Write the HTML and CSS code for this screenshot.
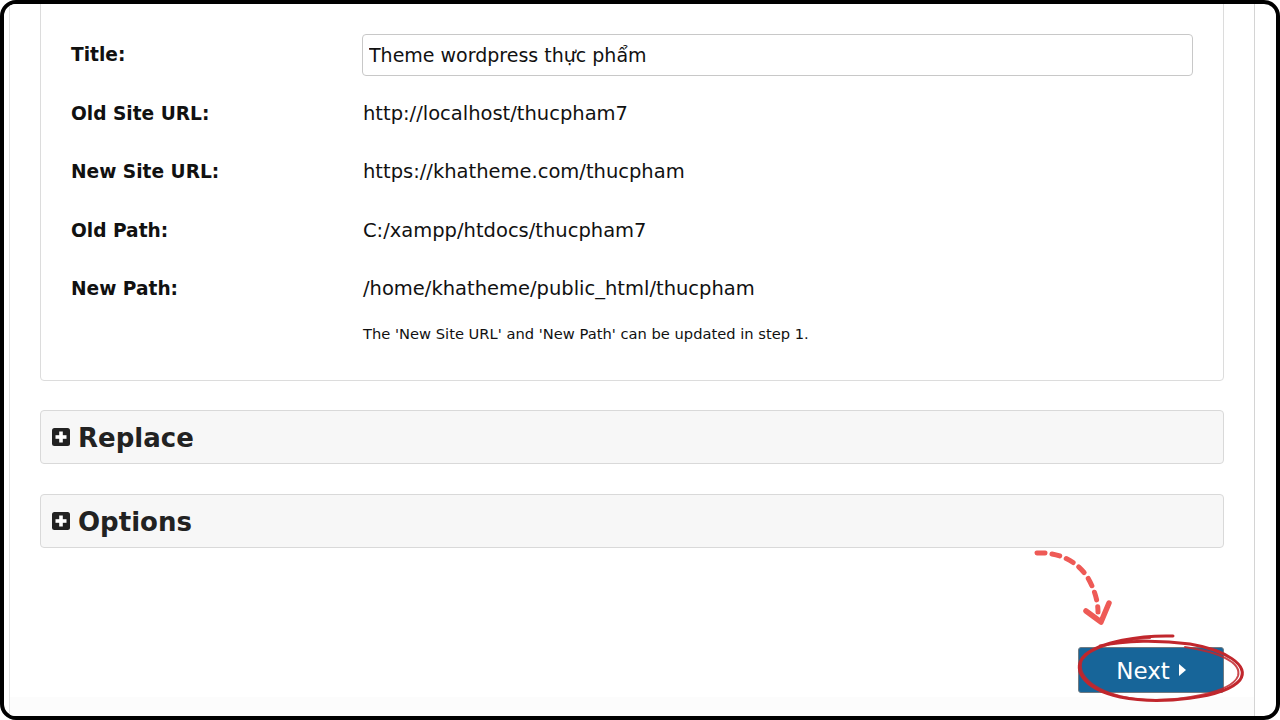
FILE: index.html
```html
<!DOCTYPE html>
<html>
<head>
    <title>Migration - Step 3</title>
    <link rel="stylesheet" href="styles.css">
</head>
<body>
    <div class="screen">
        <div class="page">
            <div class="panel">
                <div class="row">
                    <div class="label">Title:</div>
                    <div class="value"><input class="title-input" type="text" value="Theme wordpress thực phẩm"></div>
                </div>
                <div class="row">
                    <div class="label">Old Site URL:</div>
                    <div class="value">http://localhost/thucpham7</div>
                </div>
                <div class="row">
                    <div class="label">New Site URL:</div>
                    <div class="value">https://khatheme.com/thucpham</div>
                </div>
                <div class="row">
                    <div class="label">Old Path:</div>
                    <div class="value">C:/xampp/htdocs/thucpham7</div>
                </div>
                <div class="row">
                    <div class="label">New Path:</div>
                    <div class="value">/home/khatheme/public_html/thucpham</div>
                </div>
                <p class="note">The 'New Site URL' and 'New Path' can be updated in step 1.</p>
            </div>

            <div class="section">
                <svg class="toggle" width="18" height="18" viewBox="0 0 18 18"><rect width="18" height="18" rx="2.5" fill="#222"/><rect x="7.2" y="3.5" width="3.6" height="11" fill="#fff"/><rect x="3.5" y="7.2" width="11" height="3.6" fill="#fff"/></svg>
                Replace
            </div>
            <div class="section">
                <svg class="toggle" width="18" height="18" viewBox="0 0 18 18"><rect width="18" height="18" rx="2.5" fill="#222"/><rect x="7.2" y="3.5" width="3.6" height="11" fill="#fff"/><rect x="3.5" y="7.2" width="11" height="3.6" fill="#fff"/></svg>
                Options
            </div>

            <div class="actions">
                <button class="next">Next <span class="caret"></span></button>
            </div>
        </div>

        <!-- hand-drawn marks over the button -->
        <svg class="marks" width="1280" height="720" viewBox="0 0 1280 720">
            <path d="M1037 553 C1060 552 1078 562 1088 578 C1096 592 1098 604 1098 612" fill="none" stroke="#ee5a56" stroke-width="5" stroke-linecap="round" stroke-dasharray="8 7"/>
            <path d="M1086 611 L1101 622 L1109 603" fill="none" stroke="#ee5a56" stroke-width="5.5" stroke-linecap="round" stroke-linejoin="round"/>
            <path d="M1173 636 C1140 635 1100 642 1085 655 C1072 667 1080 688 1120 697 C1160 705 1225 698 1240 680 C1250 665 1225 650 1190 644 C1160 640 1125 640 1100 646" fill="none" stroke="#c1272d" stroke-width="3" stroke-linecap="round"/>
            <path d="M1150 638 C1115 640 1090 648 1082 660 C1076 676 1095 693 1135 699 C1180 703 1232 692 1238 676 C1242 662 1218 652 1185 647" fill="none" stroke="#c1272d" stroke-width="2" stroke-linecap="round" opacity="0.85"/>
        </svg>
    </div>
</body>
</html>
```

FILE: styles.css
```css
* {
    margin: 0;
    padding: 0;
    box-sizing: border-box;
}
body {
    font-family: 'DejaVu Sans', Verdana, sans-serif;
    background: #fff;
    color: #111;
}
.screen {
    position: relative;
    width: 1280px;
    height: 720px;
    border: 4px solid #000;
    border-radius: 16px;
    overflow: hidden;
    background: #fff;
}
.page {
    margin-left: 5px;
    width: 1246px;
    height: 760px;
    margin-top: -10px;
    padding: 0 30px;
    border-left: 1px solid #e2e2e2;
    border-right: 1px solid #d4d4d4;
    background: linear-gradient(to bottom, #fff 0, #fff 703px, #fcfcfc 703px);
}
.panel {
    border: 1px solid #dcdcdc;
    border-radius: 4px;
    padding: 30.5px 30px 35.5px 30px;
    background: #fff;
}
.row {
    display: flex;
    align-items: center;
    height: 58.5px;
}
.label {
    width: 292px;
    font-weight: 700;
    font-size: 18.6px;
}
.value {
    flex: 1;
    font-size: 19.5px;
}
.title-input {
    width: 831px;
    height: 42px;
    padding: 0 6px;
    border: 1px solid #c8c8c8;
    border-radius: 4px;
    font-family: 'DejaVu Sans', Verdana, sans-serif;
    font-size: 19px;
    color: #111;
    background: #fff;
    outline: none;
}
.note {
    margin: 6px 0 0 292px;
    font-size: 14.7px;
    line-height: 20px;
}
.section {
    display: flex;
    align-items: center;
    gap: 8px;
    height: 54px;
    margin-top: 29px;
    padding: 3px 0 0 11px;
    background: #f7f7f7;
    border: 1px solid #d9d9d9;
    border-radius: 4px;
    font-size: 26px;
    font-weight: 700;
    color: #222;
}
.section .toggle {
    margin-top: -3px;
}
.section + .section {
    margin-top: 30px;
}
.toggle {
    flex: none;
}
.actions {
    display: flex;
    justify-content: flex-end;
    margin-top: 99px;
}
.next {
    display: flex;
    align-items: center;
    justify-content: center;
    gap: 9px;
    width: 146px;
    height: 46px;
    padding-top: 3px;
    background: #176599;
    border: 1px solid #6f7a82;
    border-radius: 3px;
    color: #fff;
    font-family: 'DejaVu Sans', Verdana, sans-serif;
    font-size: 23px;
}
.caret {
    margin-top: -3px;
    width: 0;
    height: 0;
    border-left: 7px solid #fff;
    border-top: 6px solid transparent;
    border-bottom: 6px solid transparent;
}
.marks {
    position: absolute;
    left: -4px;
    top: -4px;
    pointer-events: none;
}
```
